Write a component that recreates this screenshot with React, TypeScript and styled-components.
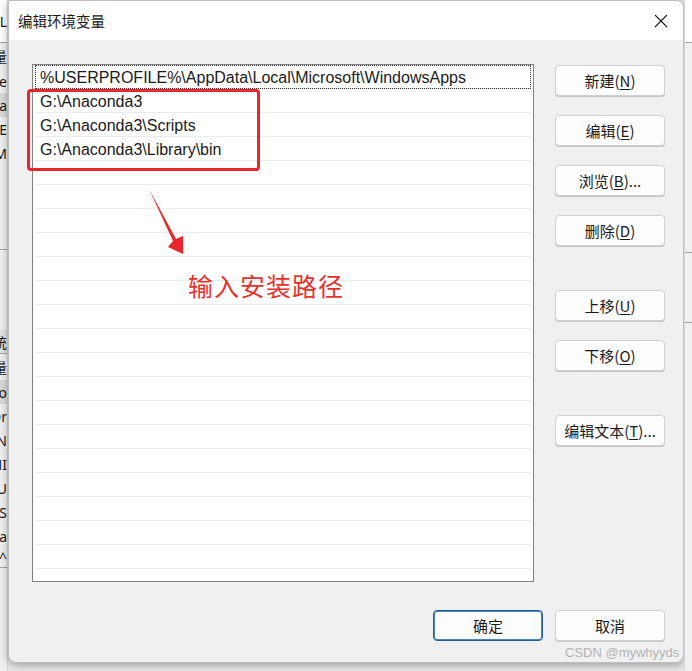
import React from "react";
import styled, { createGlobalStyle } from "styled-components";

const Global = createGlobalStyle`
  html, body { margin: 0; padding: 0; }
  body { background: #e6e6e6; font-family: "Segoe UI", "Noto Sans", "Noto Sans CJK SC", sans-serif; }
`;

const Page = styled.div`
  position: relative;
  width: 692px;
  height: 671px;
  overflow: hidden;
  display: flex;
  background: #e9e9e9;
`;

const SideStrip = styled.div<{ $side: "left" | "right" }>`
  width: 8px;
  flex: none;
  height: 671px;
  overflow: hidden;
  display: flex;
  flex-direction: column;
  align-items: ${(p) => (p.$side === "left" ? "flex-end" : "flex-start")};
  background: #f0f0f0;
  border-${(p) => (p.$side === "left" ? "right" : "left")}: 1px solid #d8d8d8;
  box-sizing: border-box;
`;

const StripCell = styled.div<{ $h: number; $bg?: string; $line?: boolean }>`
  height: ${(p) => p.$h}px;
  flex: none;
  width: 40px;
  display: flex;
  align-items: center;
  justify-content: flex-end;
  font-family: "Noto Sans", "Noto Sans CJK SC", sans-serif;
  font-size: 14px;
  color: #1a1a1a;
  background: ${(p) => p.$bg || "transparent"};
  border-bottom: ${(p) => (p.$line ? "1px solid #a0a0a0" : "none")};
  white-space: nowrap;
  box-sizing: border-box;
`;

const Dialog = styled.div`
  width: 676px;
  height: 663px;
  flex: none;
  display: flex;
  flex-direction: column;
  background: #f0f0f0;
  border-radius: 0 8px 8px 8px;
  box-shadow: 0 2px 8px rgba(0, 0, 0, 0.35);
  overflow: hidden;
  border: 1px solid #bdbdbd;
  box-sizing: border-box;
`;

const TitleBar = styled.div`
  height: 39px;
  flex: none;
  background: #ffffff;
  display: flex;
  align-items: center;
  justify-content: space-between;
  padding: 0 12px 0 9px;
`;

const Title = styled.div`
  font-family: "Noto Sans CJK SC", sans-serif;
  font-size: 14.5px;
  color: #1a1a1a;
  padding-bottom: 1px;
`;

const CloseBtn = styled.div`
  width: 20px;
  height: 20px;
  display: flex;
  align-items: center;
  justify-content: center;
`;

const Body = styled.div`
  flex: 1;
  display: flex;
  flex-direction: column;
  padding: 24px 18px 0 23px;
`;

const Main = styled.div`
  display: flex;
  gap: 21px;
`;

const ListBox = styled.div`
  width: 502px;
  height: 518px;
  flex: none;
  background: #ffffff;
  border: 1px solid #828282;
  box-sizing: border-box;
  overflow: hidden;
  display: flex;
  flex-direction: column;
  padding: 0 2px;
`;

const Row = styled.div<{ $focus?: boolean }>`
  height: 24px;
  flex: none;
  box-sizing: border-box;
  border-bottom: 1px solid #ececec;
  display: flex;
  align-items: center;
  padding: 2px 0 0 5px;
  font-family: "Liberation Sans", "Noto Sans", sans-serif;
  font-size: 16px;
  color: #1a1a1a;
  outline: ${(p) => (p.$focus ? "1px dotted #333" : "none")};
  outline-offset: -1px;
  white-space: nowrap;
`;

const ButtonCol = styled.div`
  display: flex;
  flex-direction: column;
  padding-top: 1px;
`;

const Btn = styled.div<{ $gap?: number; $primary?: boolean }>`
  width: 110px;
  height: 31px;
  margin-top: ${(p) => p.$gap ?? 0}px;
  box-sizing: border-box;
  background: #fdfdfd;
  border: ${(p) => (p.$primary ? "1px solid #1f5f96" : "1px solid #d0d0d0")};
  box-shadow: ${(p) => (p.$primary ? "inset 0 0 0 1px #4a86c0" : "0 1px 0 #c4c4c4")};
  border-radius: 4px;
  display: flex;
  align-items: center;
  justify-content: center;
  font-family: "Noto Sans CJK SC", sans-serif;
  font-size: 15px;
  color: #1a1a1a;
`;

const Key = styled.span`
  text-decoration: underline;
  text-underline-offset: 2px;
`;

const Footer = styled.div`
  display: flex;
  justify-content: flex-end;
  gap: 12px;
  margin-top: 28px;
`;

const RedBox = styled.div`
  position: absolute;
  left: 27px;
  top: 89px;
  width: 233px;
  height: 82px;
  border: 3px solid #e8262b;
  border-radius: 4px;
  box-sizing: border-box;
`;

const Note = styled.div`
  position: absolute;
  left: 188px;
  top: 268px;
  font-family: "Noto Sans CJK SC", sans-serif;
  font-size: 25px;
  line-height: 34px;
  color: #e8302c;
  letter-spacing: 1px;
`;

const ArrowSvg = styled.svg`
  position: absolute;
  left: 0;
  top: 0;
`;

const Watermark = styled.div`
  position: absolute;
  left: 565px;
  top: 645px;
  font-family: "Liberation Sans", sans-serif;
  font-size: 13px;
  color: #b3b3b3;
`;

const rows = [
  "%USERPROFILE%\\AppData\\Local\\Microsoft\\WindowsApps",
  "G:\\Anaconda3",
  "G:\\Anaconda3\\Scripts",
  "G:\\Anaconda3\\Library\\bin",
];

const leftStrip: { h: number; t?: string; bg?: string; line?: boolean }[] = [
  { h: 43, t: "LL", bg: "#ffffff", line: true },
  { h: 26, t: "变量" },
  { h: 24, t: "One" },
  { h: 24, t: "Pa", bg: "#d9d9d9" },
  { h: 24, t: "TE" },
  { h: 24, t: "TM" },
  { h: 85, line: true },
  { h: 80 },
  { h: 24, t: "系统", bg: "#e2e2e2", line: true },
  { h: 26, t: "变量" },
  { h: 24, t: "Co", bg: "#d9d9d9" },
  { h: 24, t: "Dr" },
  { h: 24, t: "EN" },
  { h: 24, t: "MI" },
  { h: 24, t: "NU" },
  { h: 24, t: "OS" },
  { h: 24, t: "Pa" },
  { h: 20, t: "^", line: true },
  { h: 100 },
];

export default function App() {
  const blanks = Array.from({ length: 18 });
  return (
    <>
      <Global />
      <Page>
        <SideStrip $side="left">
          {leftStrip.map((c, i) => (
            <StripCell key={i} $h={c.h} $bg={c.bg} $line={c.line}>
              {c.t}
            </StripCell>
          ))}
        </SideStrip>
        <Dialog>
          <TitleBar>
            <Title>编辑环境变量</Title>
            <CloseBtn>
              <svg width="16" height="16" viewBox="0 0 16 16">
                <path d="M2 2 L14 14 M14 2 L2 14" stroke="#1a1a1a" strokeWidth="1.1" />
              </svg>
            </CloseBtn>
          </TitleBar>
          <Body>
            <Main>
              <ListBox>
                {rows.map((r, i) => (
                  <Row key={i} $focus={i === 0}>
                    {r}
                  </Row>
                ))}
                {blanks.map((_, i) => (
                  <Row key={"b" + i} />
                ))}
              </ListBox>
              <ButtonCol>
                <Btn>新建(<Key>N</Key>)</Btn>
                <Btn $gap={19}>编辑(<Key>E</Key>)</Btn>
                <Btn $gap={19}>浏览(<Key>B</Key>)...</Btn>
                <Btn $gap={19}>删除(<Key>D</Key>)</Btn>
                <Btn $gap={44}>上移(<Key>U</Key>)</Btn>
                <Btn $gap={19}>下移(<Key>O</Key>)</Btn>
                <Btn $gap={44}>编辑文本(<Key>T</Key>)...</Btn>
              </ButtonCol>
            </Main>
            <Footer>
              <Btn $primary>确定</Btn>
              <Btn>取消</Btn>
            </Footer>
          </Body>
        </Dialog>
        <SideStrip $side="right">
          <StripCell $h={43} $bg="#ffffff" $line />
          <StripCell $h={210} $line />
          <StripCell $h={70} $line />
          <StripCell $h={400} />
        </SideStrip>
        <RedBox />
        <ArrowSvg width="692" height="671" viewBox="0 0 692 671">
          <polygon
            points="149,189 176,239 183,236 183,254 168,247 173,241"
            fill="#e8262b"
          />
        </ArrowSvg>
        <Note>输入安装路径</Note>
        <Watermark>CSDN @mywhyyds</Watermark>
      </Page>
    </>
  );
}
